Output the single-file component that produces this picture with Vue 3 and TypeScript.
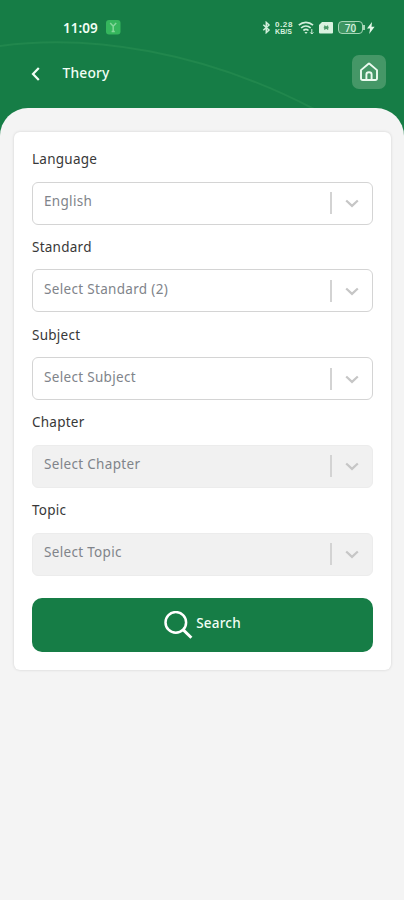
<script setup lang="ts">
interface Field {
  label: string
  text: string
  disabled: boolean
}

const fields: Field[] = [
  { label: 'Language', text: 'English', disabled: false },
  { label: 'Standard', text: 'Select Standard (2)', disabled: false },
  { label: 'Subject', text: 'Select Subject', disabled: false },
  { label: 'Chapter', text: 'Select Chapter', disabled: true },
  { label: 'Topic', text: 'Select Topic', disabled: true },
]
</script>

<template>
  <div class="screen">
    <header class="header">
      <svg class="arc" viewBox="0 0 404 140" aria-hidden="true">
        <path d="M-4 46.5C90 33 205 52 314 109" fill="none" stroke="#21874d" stroke-width="2" />
      </svg>
      <div class="status">
        <span class="time">11:09</span>
        <svg class="app-badge" width="15" height="15" viewBox="0 0 15 15">
          <rect width="14.5" height="14.5" rx="3" fill="#35b65d" />
          <path d="M4.2 3L7.2 6.2L10.2 3M7.2 6.5V12M5.6 11.4H8.8" stroke="#84d79a" stroke-width="1.5" fill="none" />
        </svg>
        <div class="indicators">
          <svg width="9" height="13" viewBox="0 0 9 13">
            <path d="M1.3 3.8L7 9L4.3 11.6V1.4L7 4L1.3 9.2" fill="none" stroke="#d3f0dc" stroke-width="1.5" />
          </svg>
          <div class="speed"><span>0.28</span><span class="unit">KB/S</span></div>
          <svg class="wifi" width="17" height="14" viewBox="0 0 17 14">
            <g fill="none" stroke="#d3f0dc" stroke-width="1.7">
              <path d="M.8 4.2C5 .3 10.8.3 15 4.2" />
              <path d="M3.1 7C6 4.3 9.8 4.3 12.7 7" />
              <path d="M5.4 9.5C7 8.1 9 8.1 10.5 9.5" />
            </g>
            <path d="M6.4 11L8 13L9.6 11Z" fill="#d3f0dc" />
            <path d="M13.8 8V13M12.2 11.4L13.8 13L15.4 11.4" fill="none" stroke="#d3f0dc" stroke-width="1" />
          </svg>
          <svg class="sim" width="15" height="12" viewBox="0 0 15 12">
            <path d="M3 0H13Q14 0 14 1V10.5Q14 11.5 13 11.5H1Q0 11.5 0 10.5V3Z" fill="#d9f2e0" />
            <path d="M5.3 3.7L9.1 7.5M9.1 3.7L5.3 7.5M4.8 5.6H9.6" stroke="#4b9b69" stroke-width="1.4" />
          </svg>
          <div class="battery"><span>70</span></div>
          <svg class="bolt" width="8" height="12" viewBox="0 0 8 12">
            <path d="M5 0L0 6.6H3.1L2.2 12L7.6 4.8H4.5Z" fill="#e4f8e9" />
          </svg>
        </div>
      </div>
      <div class="nav">
        <button class="back" aria-label="Back">
          <svg width="10" height="16" viewBox="0 0 10 16">
            <path d="M8.8 2L3 8L8.8 14" fill="none" stroke="#f2fff5" stroke-width="2.2" />
          </svg>
        </button>
        <h1 class="title">Theory</h1>
        <button class="home" aria-label="Home">
          <svg width="20" height="20" viewBox="0 0 20 20">
            <path d="M2 8.1L9.5 1.7Q10 1.3 10.5 1.7L18 8.1V16.2Q18 18 16.2 18H3.8Q2 18 2 16.2Z" fill="none" stroke="#ecfbf0" stroke-width="1.9" stroke-linejoin="round" />
            <path d="M7.4 18V12.6Q7.4 10.3 10 10.3T12.6 12.6V18" fill="none" stroke="#ecfbf0" stroke-width="1.9" />
          </svg>
        </button>
      </div>
    </header>
    <main class="sheet">
      <form class="card" @submit.prevent>
        <div v-for="field in fields" :key="field.label" class="field">
          <div class="label">{{ field.label }}</div>
          <div class="select" :class="{ disabled: field.disabled }">
            <span class="value">{{ field.text }}</span>
            <span class="divider"></span>
            <svg class="chevron" width="14" height="9" viewBox="0 0 14 9">
              <path d="M1.2 1.5L7 6.9L12.8 1.5" fill="none" stroke="#c6c6c6" stroke-width="2.2" />
            </svg>
          </div>
        </div>
        <button class="search" type="submit">
          <svg width="29" height="29" viewBox="0 0 29 29">
            <circle cx="11.8" cy="11.4" r="10.3" fill="none" stroke="#fff" stroke-width="2.5" />
            <path d="M19 18.6L27.4 26.8" stroke="#fff" stroke-width="2.9" />
          </svg>
          <span>Search</span>
        </button>
      </form>
    </main>
  </div>
</template>

<style>
body {
  background: #f4f4f4;
}
</style>

<style scoped>
.screen {
  position: relative;
  display: flex;
  flex-direction: column;
  width: 404px;
  height: 900px;
  overflow: hidden;
  background: #f4f4f4;
  font-family: "Noto Sans", "Open Sans", sans-serif;
}

.screen * {
  box-sizing: border-box;
}

button {
  border: 0;
  padding: 0;
  background: none;
  font-family: inherit;
}

svg {
  display: block;
  flex: none;
}

.header {
  position: relative;
  height: 136px;
  flex: none;
  background: #167d46;
}

.arc {
  position: absolute;
  inset: 0;
  width: 404px;
  height: 140px;
}

.status {
  position: relative;
  display: flex;
  align-items: center;
  height: 55px;
  padding: 0 29px 0 63px;
}

.time {
  width: 43px;
  color: #f0fff4;
  font-size: 13.5px;
  font-weight: 600;
  letter-spacing: 0.05px;
}

.indicators {
  display: flex;
  align-items: center;
  margin-left: auto;
}

.speed {
  display: flex;
  flex-direction: column;
  justify-content: center;
  width: 19px;
  height: 14px;
  margin-left: 4px;
  color: #d6f1de;
  font-family: "Liberation Sans", sans-serif;
  font-size: 8px;
  font-weight: 700;
  line-height: 7px;
  letter-spacing: 0.6px;
}

.speed span {
  height: 7px;
  overflow: hidden;
}

.speed .unit {
  font-size: 7px;
  letter-spacing: 0.1px;
}

.wifi {
  margin-left: 4px;
}

.sim {
  margin-left: 4px;
}

.battery {
  position: relative;
  display: flex;
  align-items: center;
  justify-content: center;
  width: 25px;
  height: 13px;
  margin: 0 4px;
  border: 1.5px solid #a5d5b5;
  border-radius: 4px;
  background: linear-gradient(90deg, #3e9562 70%, transparent 70%);
  color: #ddf5e4;
  font-size: 10px;
  font-weight: 500;
  line-height: 10px;
}

.battery::after {
  content: "";
  position: absolute;
  right: -3px;
  top: 3px;
  width: 2px;
  height: 5px;
  background: #a5d5b5;
}

.nav {
  position: relative;
  display: flex;
  align-items: center;
  height: 34px;
  padding: 0 18px 0 30px;
}

.back {
  margin-top: 4px;
}

.title {
  margin: 2px 0 0 22.5px;
  color: #f2fff5;
  font-size: 13.8px;
  font-weight: 500;
  line-height: 20px;
  letter-spacing: 0.2px;
}

.home {
  display: flex;
  align-items: center;
  justify-content: center;
  width: 34px;
  height: 34px;
  margin-left: auto;
  border-radius: 7px;
  background: #459767;
}

.sheet {
  position: relative;
  flex: 1;
  margin-top: -28px;
  padding: 24px 13px 0 14px;
  border-radius: 28px 28px 0 0;
  background: #f4f4f4;
}

.card {
  height: 538px;
  padding: 17px 18px 0;
  border-radius: 6px;
  background: #fff;
  box-shadow: 0 0 3px rgba(0, 0, 0, 0.15);
}

.field {
  height: 87.75px;
}

.label {
  height: 32.6px;
  color: #383838;
  font-size: 13.5px;
  line-height: 21px;
  letter-spacing: 0.25px;
}

.select {
  display: flex;
  align-items: center;
  height: 43px;
  padding: 0 13.5px 0 11px;
  border: 1px solid #d4d4d4;
  border-radius: 6px;
  background: #fff;
}

.disabled {
  border-color: #ececec;
  background: #f1f1f1;
}

.value {
  padding-bottom: 4px;
  color: #80848a;
  font-size: 13.5px;
  line-height: 20px;
  letter-spacing: 0.32px;
}

.divider {
  width: 2.5px;
  height: 22px;
  margin-left: auto;
  background: #d3d3d3;
}

.chevron {
  margin: 1px 0 0 12.5px;
}

.search {
  display: flex;
  align-items: center;
  justify-content: center;
  gap: 3px;
  width: 341px;
  height: 54px;
  margin-top: 10.5px;
  border-radius: 10px;
  background: #167d46;
  color: #f2fff5;
  font-size: 13.5px;
  font-weight: 500;
  letter-spacing: 0.2px;
}

.search span {
  padding-bottom: 4px;
}
</style>
